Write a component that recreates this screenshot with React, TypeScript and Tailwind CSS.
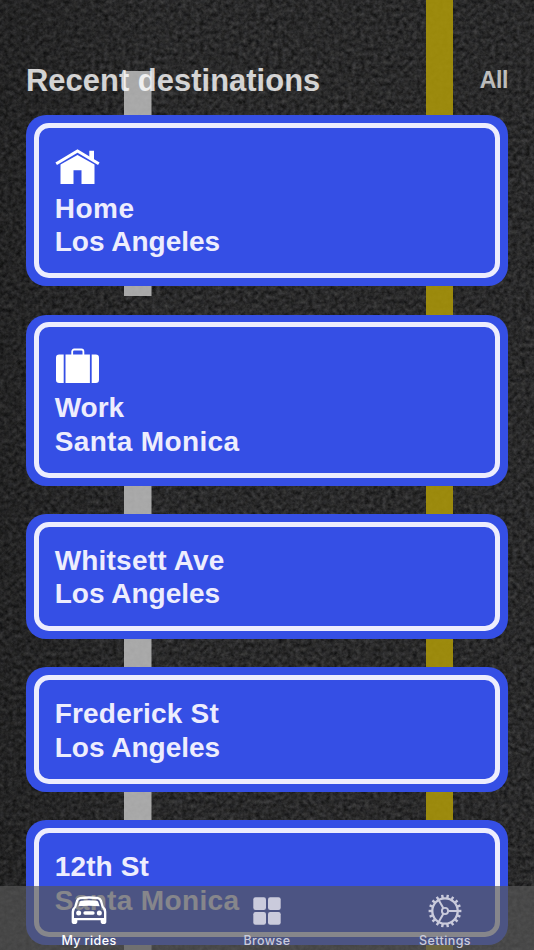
import React from "react";

type Destination = {
  title: string;
  city: string;
  icon?: "home" | "work";
  titleClass?: string;
  cityClass?: string;
};

const destinations: Destination[] = [
  { title: "Home", city: "Los Angeles", icon: "home", titleClass: "tracking-[0.500px]" },
  { title: "Work", city: "Santa Monica", icon: "work", cityClass: "tracking-[0.350px]" },
  { title: "Whitsett Ave", city: "Los Angeles", titleClass: "tracking-[0.200px]" },
  { title: "Frederick St", city: "Los Angeles", titleClass: "tracking-[0.200px]" },
  { title: "12th St", city: "Santa Monica", titleClass: "tracking-[0.150px]", cityClass: "tracking-[0.350px]" },
];

function HomeIcon() {
  return (
    <svg width="45" height="36" viewBox="0 0 45 36" fill="#fff" className="block">
      <path d="M34.300 1.800h4.700v11l-4.700-3z" />
      <path d="M1.200 14.800 22.500 2 43.800 14.800" fill="none" stroke="#fff" strokeWidth="3" />
      <path d="M5.500 15.600 22.500 5.900l17 9.700V35H26.500V21.200h-8V35h-13z" />
    </svg>
  );
}

function WorkIcon() {
  return (
    <svg width="45" height="36" viewBox="0 0 45 36" fill="#fff" className="block">
      <path d="M8.700 6.500v28.500H4.200A3.200 3.200 0 0 1 1 31.800V9.700A3.200 3.200 0 0 1 4.200 6.500z" />
      <path d="M36.700 6.500h4.100A3.200 3.200 0 0 1 44 9.700v22.100a3.200 3.200 0 0 1-3.200 3.200h-4.100z" />
      <path d="M10.500 6.500h24.400v28.500H10.500z" />
      <path d="M17.200 7.500V3.500a2 2 0 0 1 2-2h7.200a2 2 0 0 1 2 2v4" fill="none" stroke="#fff" strokeWidth="1.800" />
    </svg>
  );
}

function CarIcon() {
  return (
    <svg width="36" height="29" viewBox="0 0 108 87" fill="#fff" className="block">
      <path
        fillRule="evenodd"
        d="M27 3Q54-1 81 3Q90 4 93 13L98 31Q106 38 106 47V77Q106 84 98 84Q89 84 89 77V73H19V77Q19 84 10 84Q2 84 2 77V47Q2 38 10 31L15 13Q18 4 27 3ZM28 10Q54 6 80 10Q85 11 87 17L92 34Q99 40 99 48V66H9V48Q9 40 16 34L21 17Q23 11 28 10Z"
      />
      <path d="M31 14Q54 11 77 14Q81 15 82 19L86 31Q54 28 22 31L26 19Q27 15 31 14Z" />
      <circle cx="23" cy="51" r="7.500" />
      <circle cx="85" cy="51" r="7.500" />
      <rect x="37" y="46" width="34" height="10" rx="5" />
    </svg>
  );
}

function BrowseIcon() {
  return (
    <svg width="28" height="28" viewBox="0 0 28 28" fill="#cacbdc" className="block">
      <rect x="0.300" y="0.300" width="12.700" height="12.700" rx="2.200" />
      <rect x="15" y="0.300" width="12.700" height="12.700" rx="2.200" />
      <rect x="0.300" y="15" width="12.700" height="12.700" rx="2.200" />
      <rect x="15" y="15" width="12.700" height="12.700" rx="2.200" />
    </svg>
  );
}

function GearIcon() {
  const teeth = Array.from({ length: 18 }, (_, i) => i * 20);
  return (
    <svg width="34" height="34" viewBox="-17 -17 34 34" fill="none" stroke="#cacbdc" className="block">
      <circle r="12.700" strokeWidth="2.300" />
      <circle r="3.100" strokeWidth="1.900" />
      {teeth.map((a) => (
        <path key={a} d="M13 0H16.400" strokeWidth="2.400" transform={`rotate(${a})`} />
      ))}
      {[0, 120, 240].map((a) => (
        <path key={a} d="M3.500 0H13" strokeWidth="2" transform={`rotate(${a})`} />
      ))}
    </svg>
  );
}

function Road() {
  return (
    <svg className="absolute inset-0 block" width="534" height="950" viewBox="0 0 534 950">
      <defs>
        <filter id="asphalt" x="0" y="0" width="100%" height="100%" colorInterpolationFilters="sRGB">
          <feTurbulence type="fractalNoise" baseFrequency="0.23" numOctaves="3" seed="11" />
          <feColorMatrix values="0.22 0.03 0 0.08 -0.003  0.22 0.02 0 0.08 0.002  0.22 0.02 0.02 0.08 -0.006  0 0 0 0 1" />
        </filter>
        <linearGradient id="shade">
          <stop offset="0" stopColor="#000" stopOpacity="0.150" />
          <stop offset="0.300" stopColor="#000" stopOpacity="0" />
        </linearGradient>
      </defs>
      <rect width="534" height="950" fill="#282828" />
      <rect width="534" height="950" filter="url(#asphalt)" />
      <rect width="534" height="950" fill="url(#shade)" />
      <path d="M124 71h27.500v225H124zM124 400h27.500v550H124z" fill="#bebebe" fillOpacity="0.860" />
      <path d="M426 0h27v950h-27z" fill="#a8950a" fillOpacity="0.900" />
    </svg>
  );
}

function Sign({ title, city, icon, titleClass = "", cityClass = "" }: Destination) {
  return (
    <div className={`shrink-0 rounded-[20px] bg-[#354fe5] p-[7.700px] ${icon ? "h-[171px]" : "h-[124.500px]"}`}>
      <div className="flex h-full flex-col justify-center rounded-[15px] border-[5px] border-[#ededfd] px-[16px] pt-[2px] text-[28px] leading-[33.500px] text-[#ededfd]">
        {icon && <div className="mt-[4px] mb-[7px]">{icon === "home" ? <HomeIcon /> : <WorkIcon />}</div>}
        <div className={titleClass}>{title}</div>
        <div className={cityClass}>{city}</div>
      </div>
    </div>
  );
}

function Tab({ label, active, children }: { label: string; active?: boolean; children: React.ReactNode }) {
  return (
    <div className={`flex flex-1 flex-col items-center ${active ? "text-white" : "text-[#cacbdc]"}`}>
      <div className="flex h-[49px] items-center justify-center">{children}</div>
      <div className="-mt-[3px] text-[12.500px] leading-[17px] font-medium tracking-[0.400px]">{label}</div>
    </div>
  );
}

export default function App() {
  return (
    <div className="relative h-[950px] w-[534px] overflow-hidden bg-[#282828] font-['Liberation_Sans',sans-serif] font-bold">
      <Road />
      <main className="relative px-[26px]">
        <header className="flex h-[115px] items-end justify-between pb-[17px]">
          <h1 className="text-[30.900px] leading-[34px] tracking-[0.040px] text-white/80">Recent destinations</h1>
          <span className="mb-[4px] text-[23px] leading-[28px] tracking-[-0.400px] text-white/70">All</span>
        </header>
        <div className="flex flex-col gap-[28.600px]">
          {destinations.map((d) => (
            <Sign key={d.title} {...d} />
          ))}
        </div>
      </main>
      <nav className="absolute inset-x-0 bottom-0 flex h-[64px] bg-[#575757]/69 font-['Inter',sans-serif]">
        <Tab label="My rides" active>
          <CarIcon />
        </Tab>
        <Tab label="Browse">
          <BrowseIcon />
        </Tab>
        <Tab label="Settings">
          <GearIcon />
        </Tab>
      </nav>
    </div>
  );
}
